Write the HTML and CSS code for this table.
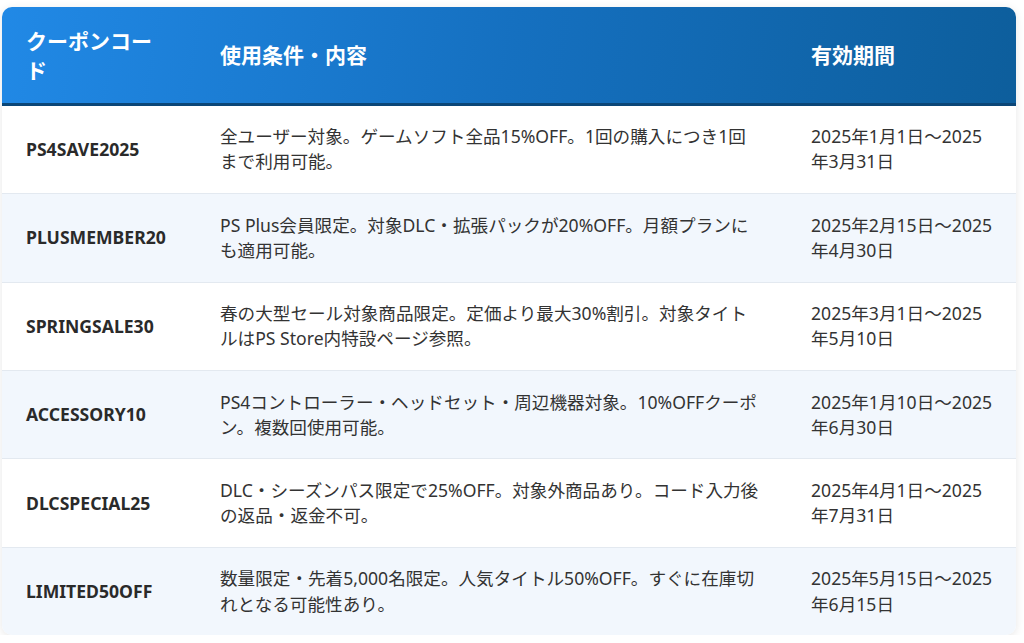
FILE: index.html
```html
<!DOCTYPE html>
<html lang="ja">
<head>
<meta charset="utf-8">
<title>クーポンコード一覧</title>
<link rel="stylesheet" href="styles.css">
</head>
<body>
<div class="table-wrap">
  <table class="coupon-table">
    <colgroup>
      <col class="c-code">
      <col class="c-desc">
      <col class="c-date">
    </colgroup>
    <thead>
      <tr>
        <th>クーポンコード</th>
        <th>使用条件・内容</th>
        <th>有効期間</th>
      </tr>
    </thead>
    <tbody>
      <tr>
        <td class="code">PS4SAVE2025</td>
        <td class="desc">全ユーザー対象。ゲームソフト全品15%OFF。1回の購入につき1回まで利用可能。</td>
        <td class="date">2025年1月1日〜2025年3月31日</td>
      </tr>
      <tr>
        <td class="code">PLUSMEMBER20</td>
        <td class="desc">PS Plus会員限定。対象DLC・拡張パックが20%OFF。月額プランにも適用可能。</td>
        <td class="date">2025年2月15日〜2025年4月30日</td>
      </tr>
      <tr>
        <td class="code">SPRINGSALE30</td>
        <td class="desc">春の大型セール対象商品限定。定価より最大30%割引。対象タイトルはPS Store内特設ページ参照。</td>
        <td class="date">2025年3月1日〜2025年5月10日</td>
      </tr>
      <tr>
        <td class="code">ACCESSORY10</td>
        <td class="desc">PS4コントローラー・ヘッドセット・周辺機器対象。10%OFFクーポン。複数回使用可能。</td>
        <td class="date">2025年1月10日〜2025年6月30日</td>
      </tr>
      <tr>
        <td class="code">DLCSPECIAL25</td>
        <td class="desc">DLC・シーズンパス限定で25%OFF。対象外商品あり。コード入力後の返品・返金不可。</td>
        <td class="date">2025年4月1日〜2025年7月31日</td>
      </tr>
      <tr>
        <td class="code">LIMITED50OFF</td>
        <td class="desc">数量限定・先着5,000名限定。人気タイトル50%OFF。すぐに在庫切れとなる可能性あり。</td>
        <td class="date">2025年5月15日〜2025年6月15日</td>
      </tr>
    </tbody>
  </table>
</div>
</body>
</html>
```

FILE: styles.css
```css
html, body {
  margin: 0;
  padding: 0;
  background: #ffffff;
}

body {
  font-family: "Noto Sans", "Noto Sans CJK JP", sans-serif;
  color: #333333;
}

.table-wrap {
  margin: 7px 8px 0 2px;
  width: 1014px;
  border-radius: 10px;
  overflow: hidden;
  box-shadow: 0 2px 10px rgba(0, 0, 0, 0.10);
}

.coupon-table {
  width: 100%;
  border-collapse: collapse;
  table-layout: fixed;
}

.c-code { width: 194px; }
.c-desc { width: 591px; }
.c-date { width: 229px; }

.coupon-table thead tr {
  background: linear-gradient(100deg, #2189e6 0%, #1570c0 50%, #0d5e9c 100%);
}

.coupon-table th {
  color: #ffffff;
  font-family: "Noto Sans CJK JP", sans-serif;
  font-size: 21px;
  font-weight: 700;
  line-height: 1.4;
  text-align: left;
  padding: 18.5px 24px;
  border-bottom: 3px solid #0b4677;
  vertical-align: middle;
}

.coupon-table td {
  font-size: 17.6px;
  line-height: 25.2px;
  padding: 18.5px 24px;
  vertical-align: middle;
  border-bottom: 1px solid #e3e9f0;
  color: #333333;
}

.coupon-table td.desc {
  padding-right: 27px;
}

.coupon-table td.date {
  padding-right: 20px;
}

.coupon-table tbody tr:nth-child(even) td {
  background: #f2f7fd;
}

.coupon-table tbody tr:last-child td {
  border-bottom: none;
}

.coupon-table td.code {
  font-weight: 700;
  color: #2a2a2a;
}
```
